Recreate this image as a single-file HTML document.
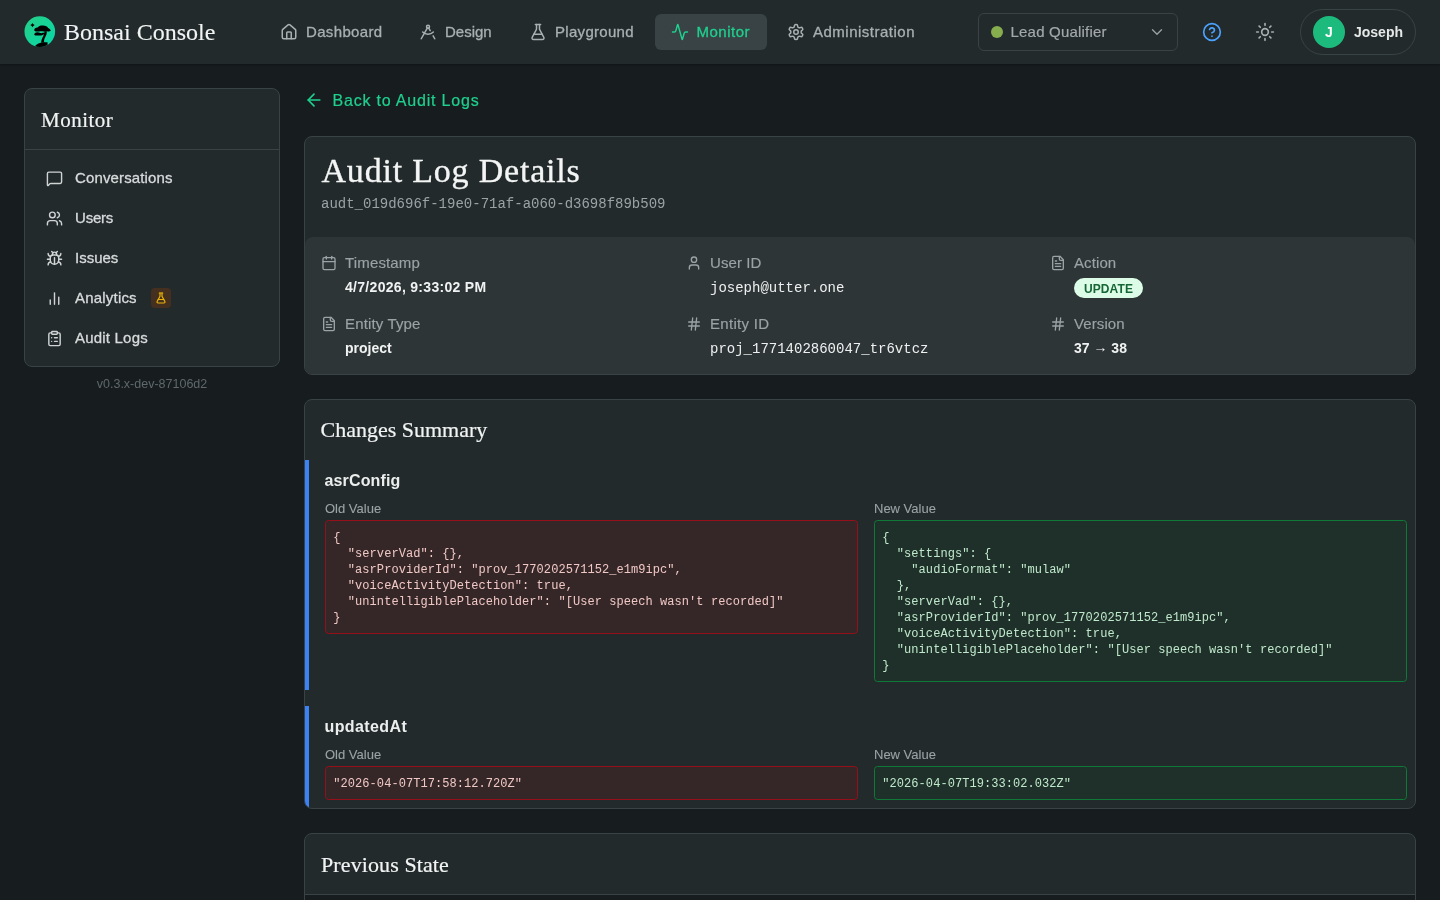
<!DOCTYPE html>
<html><head><meta charset="utf-8">
<style>
*{box-sizing:border-box;margin:0;padding:0}
html,body{width:1440px;height:900px;overflow:hidden;background:#171c1e;font-family:"Liberation Sans",sans-serif}
#root{position:absolute;left:0;top:0;width:1440px;height:900px;transform:translateZ(0)}
.b{position:absolute}
.t{position:absolute;white-space:pre}
svg.i{position:absolute;fill:none;stroke:currentColor;stroke-linecap:round;stroke-linejoin:round;display:block;overflow:visible}
</style></head><body><div id="root">

<div class="b" style="left:0;top:0;width:1440px;height:64px;background:#222a2b;box-shadow:0 1px 2px rgba(0,0,0,.3)"></div>
<svg class="b" style="left:24px;top:16px" width="32" height="32" viewBox="0 0 32 32">
<defs><linearGradient id="lg" x1="0" y1="0" x2="1" y2="1"><stop offset="0" stop-color="#26cf86"/><stop offset="1" stop-color="#06d8aa"/></linearGradient>
<clipPath id="cc"><circle cx="15.8" cy="15.6" r="15.3"/></clipPath></defs>
<circle cx="15.8" cy="15.6" r="15.3" fill="url(#lg)"/>
<g clip-path="url(#cc)" fill="#000">
<path d="M8.5 6.9l.8 1.4 1.4.8-1.4.8-.8 1.4-.8-1.4-1.4-.8 1.4-.8z"/>
<path d="M10.2 14.2C10.2 12.8 11.5 11.8 13.5 11.6 14.5 10 16.5 9.4 19 9.5 21.5 9.6 23.5 10.5 24.2 12 25.5 12.6 26.6 13.6 26.8 14.8 25.8 15.5 24.3 15.6 23 15.2 21 15.6 18.5 15.4 16.5 15.3 14.5 15.5 12.3 15.6 11.2 15.2 10.6 15 10.2 14.7 10.2 14.2Z"/>
<path d="M10.2 18.4C10.6 17.1 12 16.2 13.6 16.3 15 16.4 16.2 16.9 17.4 17.2 18.8 16.9 20.2 16.6 21 17 20.5 18.3 19 19.2 17.2 19.4 15.5 19.6 13.5 19.6 11.8 19.5 11 19.4 10.4 19 10.2 18.4Z"/>
<path d="M20.5 15.3 22.8 15.3C23 17.5 22.2 19.5 21.2 21.2 20.2 23 19.8 24.8 20.2 26.5L17.2 26.8C17.2 24.8 17.8 22.8 18.8 21 19.8 19.2 20.6 17.3 20.5 15.3Z"/>
<path d="M10.5 31C12.2 28 16 26 23.5 26.3L23.8 33 10.5 33Z"/>
</g>
</svg>
<div class="t" style="left:64px;top:15.7px;font-family:'Liberation Serif',serif;font-size:24px;line-height:32px;color:#f2f4f4;font-weight:normal;letter-spacing:0px;-webkit-text-stroke:0.12px #f2f4f4;">Bonsai Console</div>
<svg class="i" style="left:279.9px;top:22.7px;color:#a9b0b2;" width="18" height="18" viewBox="0 0 24 24" stroke-width="2"><path d="M15 21v-8a1 1 0 0 0-1-1h-4a1 1 0 0 0-1 1v8"/><path d="M3 10a2 2 0 0 1 .709-1.528l7-5.999a2 2 0 0 1 2.582 0l7 5.999A2 2 0 0 1 21 10v9a2 2 0 0 1-2 2H5a2 2 0 0 1-2-2z"/></svg>
<div class="t" style="left:306.0px;top:22px;font-family:'Liberation Sans',sans-serif;font-size:15px;line-height:20px;color:#a9b0b2;font-weight:normal;letter-spacing:0.35px;-webkit-text-stroke:0.3px #a9b0b2;">Dashboard</div>
<svg class="i" style="left:418.9px;top:22.7px;color:#a9b0b2;" width="18" height="18" viewBox="0 0 24 24" stroke-width="2"><path d="m12.99 6.74 1.93 3.44"/><path d="M19.136 12a10 10 0 0 1-14.271 0"/><path d="m21 21-2.16-3.84"/><path d="m3 21 8.02-14.26"/><circle cx="12" cy="5" r="2"/></svg>
<div class="t" style="left:445.0px;top:22px;font-family:'Liberation Sans',sans-serif;font-size:15px;line-height:20px;color:#a9b0b2;font-weight:normal;letter-spacing:0.0px;-webkit-text-stroke:0.3px #a9b0b2;">Design</div>
<svg class="i" style="left:528.9px;top:22.7px;color:#a9b0b2;" width="18" height="18" viewBox="0 0 24 24" stroke-width="2"><path d="M14 2v6a2 2 0 0 0 .245.96l5.51 10.08A2 2 0 0 1 18 22H6a2 2 0 0 1-1.755-2.96l5.51-10.08A2 2 0 0 0 10 8V2"/><path d="M6.453 15h11.094"/><path d="M8.5 2h7"/></svg>
<div class="t" style="left:555.0px;top:22px;font-family:'Liberation Sans',sans-serif;font-size:15px;line-height:20px;color:#a9b0b2;font-weight:normal;letter-spacing:0.3px;-webkit-text-stroke:0.3px #a9b0b2;">Playground</div>
<div class="b" style="left:655px;top:14px;width:112px;height:36px;border-radius:6px;background:#394244"></div>
<svg class="i" style="left:671px;top:23px;color:#1fd08e;" width="18" height="18" viewBox="0 0 24 24" stroke-width="2"><path d="M22 12h-2.48a2 2 0 0 0-1.93 1.46l-2.35 8.36a.25.25 0 0 1-.48 0L9.24 2.18a.25.25 0 0 0-.48 0l-2.35 8.36A2 2 0 0 1 4.49 12H2"/></svg>
<div class="t" style="left:696.5px;top:22px;font-family:'Liberation Sans',sans-serif;font-size:15px;line-height:20px;color:#1fd08e;font-weight:normal;letter-spacing:0.5px;-webkit-text-stroke:0.3px #1fd08e;">Monitor</div>
<svg class="i" style="left:786.9px;top:22.7px;color:#a9b0b2;" width="18" height="18" viewBox="0 0 24 24" stroke-width="2"><path d="M12.22 2h-.44a2 2 0 0 0-2 2v.18a2 2 0 0 1-1 1.73l-.43.25a2 2 0 0 1-2 0l-.15-.08a2 2 0 0 0-2.73.73l-.22.38a2 2 0 0 0 .73 2.73l.15.1a2 2 0 0 1 1 1.72v.51a2 2 0 0 1-1 1.74l-.15.09a2 2 0 0 0-.73 2.73l.22.38a2 2 0 0 0 2.73.73l.15-.08a2 2 0 0 1 2 0l.43.25a2 2 0 0 1 1 1.73V20a2 2 0 0 0 2 2h.44a2 2 0 0 0 2-2v-.18a2 2 0 0 1 1-1.73l.43-.25a2 2 0 0 1 2 0l.15.08a2 2 0 0 0 2.73-.73l.22-.39a2 2 0 0 0-.73-2.73l-.15-.08a2 2 0 0 1-1-1.74v-.5a2 2 0 0 1 1-1.74l.15-.09a2 2 0 0 0 .73-2.73l-.22-.38a2 2 0 0 0-2.73-.73l-.15.08a2 2 0 0 1-2 0l-.43-.25a2 2 0 0 1-1-1.73V4a2 2 0 0 0-2-2z"/><circle cx="12" cy="12" r="3"/></svg>
<div class="t" style="left:813.0px;top:22px;font-family:'Liberation Sans',sans-serif;font-size:15px;line-height:20px;color:#a9b0b2;font-weight:normal;letter-spacing:0.5px;-webkit-text-stroke:0.3px #a9b0b2;">Administration</div>
<div class="b" style="left:978px;top:13px;width:200px;height:38px;border:1px solid #394345;border-radius:6px"></div>
<div class="b" style="left:991px;top:26px;width:12px;height:12px;border-radius:50%;background:#86ad4e"></div>
<div class="t" style="left:1010.5px;top:22px;font-family:'Liberation Sans',sans-serif;font-size:15px;line-height:20px;color:#a3a9ab;font-weight:normal;letter-spacing:0.2px;-webkit-text-stroke:0.2px #a3a9ab;">Lead Qualifier</div>
<svg class="i" style="left:1148px;top:23px;color:#9aa0a2;" width="18" height="18" viewBox="0 0 24 24" stroke-width="1.8"><path d="m6 9 6 6 6-6"/></svg>
<svg class="i" style="left:1202px;top:22px;color:#4ba3ff;" width="20" height="20" viewBox="0 0 24 24" stroke-width="2"><circle cx="12" cy="12" r="10"/><path d="M9.09 9a3 3 0 0 1 5.83 1c0 2-3 3-3 3"/><path d="M12 17h.01"/></svg>
<svg class="i" style="left:1255px;top:22px;color:#a8aeb0;" width="20" height="20" viewBox="0 0 24 24" stroke-width="2"><circle cx="12" cy="12" r="4"/><path d="M12 2v2"/><path d="M12 20v2"/><path d="m4.93 4.93 1.41 1.41"/><path d="m17.66 17.66 1.41 1.41"/><path d="M2 12h2"/><path d="M20 12h2"/><path d="m6.34 17.66-1.41 1.41"/><path d="m19.07 4.93-1.41 1.41"/></svg>
<div class="b" style="left:1300px;top:9px;width:116px;height:46px;border:1px solid #394345;border-radius:23px"></div>
<div class="b" style="left:1313px;top:16px;width:32px;height:32px;border-radius:50%;background:#1dba7d"></div>
<div class="t" style="left:1313px;top:22px;font-family:'Liberation Sans',sans-serif;font-size:14px;line-height:20px;color:#ffffff;font-weight:bold;letter-spacing:0px;width:32px;text-align:center">J</div>
<div class="t" style="left:1354px;top:22px;font-family:'Liberation Sans',sans-serif;font-size:14px;line-height:20px;color:#e6e8e8;font-weight:bold;letter-spacing:0px;">Joseph</div>
<div class="b" style="left:24px;top:88px;width:256px;height:279px;background:#222a2b;border:1px solid #394345;border-radius:8px"></div>
<div class="t" style="left:41px;top:105.5px;font-family:'Liberation Serif',serif;font-size:21px;line-height:28px;color:#f2f4f4;font-weight:normal;letter-spacing:0.5px;-webkit-text-stroke:0.2px #f2f4f4;">Monitor</div>
<div class="b" style="left:25px;top:149px;width:254px;height:1px;background:#394345"></div>
<svg class="i" style="left:45.5px;top:169.5px;color:#d0d4d5;" width="17" height="17" viewBox="0 0 24 24" stroke-width="2"><path d="M22 17a2 2 0 0 1-2 2H6.828a2 2 0 0 0-1.414.586l-2.202 2.202A.71.71 0 0 1 2 21.286V5a2 2 0 0 1 2-2h16a2 2 0 0 1 2 2z"/></svg>
<div class="t" style="left:75px;top:168px;font-family:'Liberation Sans',sans-serif;font-size:15px;line-height:20px;color:#d8dbdc;font-weight:normal;letter-spacing:0.13px;-webkit-text-stroke:0.3px #d8dbdc;">Conversations</div>
<svg class="i" style="left:45.5px;top:209.5px;color:#d0d4d5;" width="17" height="17" viewBox="0 0 24 24" stroke-width="2"><path d="M16 21v-2a4 4 0 0 0-4-4H6a4 4 0 0 0-4 4v2"/><circle cx="9" cy="7" r="4"/><path d="M22 21v-2a4 4 0 0 0-3-3.87"/><path d="M16 3.13a4 4 0 0 1 0 7.75"/></svg>
<div class="t" style="left:75px;top:208px;font-family:'Liberation Sans',sans-serif;font-size:15px;line-height:20px;color:#d8dbdc;font-weight:normal;letter-spacing:-0.2px;-webkit-text-stroke:0.3px #d8dbdc;">Users</div>
<svg class="i" style="left:45.5px;top:249.5px;color:#d0d4d5;" width="17" height="17" viewBox="0 0 24 24" stroke-width="2"><path d="m8 2 1.88 1.88"/><path d="M14.12 3.88 16 2"/><path d="M9 7.13v-1a3.003 3.003 0 1 1 6 0v1"/><path d="M12 20c-3.3 0-6-2.7-6-6v-3a4 4 0 0 1 4-4h4a4 4 0 0 1 4 4v3c0 3.3-2.7 6-6 6"/><path d="M12 20v-9"/><path d="M6.53 9C4.6 8.8 3 7.1 3 5"/><path d="M6 13H2"/><path d="M3 21c0-2.1 1.7-3.9 3.8-4"/><path d="M20.97 5c0 2.1-1.6 3.8-3.5 4"/><path d="M22 13h-4"/><path d="M17.2 17c2.1.1 3.8 1.9 3.8 4"/></svg>
<div class="t" style="left:75px;top:248px;font-family:'Liberation Sans',sans-serif;font-size:15px;line-height:20px;color:#d8dbdc;font-weight:normal;letter-spacing:0px;-webkit-text-stroke:0.3px #d8dbdc;">Issues</div>
<svg class="i" style="left:45.5px;top:289.5px;color:#d0d4d5;" width="17" height="17" viewBox="0 0 24 24" stroke-width="2"><path d="M18 20V10"/><path d="M12 20V4"/><path d="M6 20v-6"/></svg>
<div class="t" style="left:75px;top:288px;font-family:'Liberation Sans',sans-serif;font-size:15px;line-height:20px;color:#d8dbdc;font-weight:normal;letter-spacing:0.2px;-webkit-text-stroke:0.3px #d8dbdc;">Analytics</div>
<svg class="i" style="left:45.5px;top:329.5px;color:#d0d4d5;" width="17" height="17" viewBox="0 0 24 24" stroke-width="2"><rect width="8" height="4" x="8" y="2" rx="1" ry="1"/><path d="M16 4h2a2 2 0 0 1 2 2v14a2 2 0 0 1-2 2H6a2 2 0 0 1-2-2V6a2 2 0 0 1 2-2h2"/><path d="M12 11h4"/><path d="M12 16h4"/><path d="M8 11h.01"/><path d="M8 16h.01"/></svg>
<div class="t" style="left:75px;top:328px;font-family:'Liberation Sans',sans-serif;font-size:15px;line-height:20px;color:#d8dbdc;font-weight:normal;letter-spacing:0.2px;-webkit-text-stroke:0.3px #d8dbdc;">Audit Logs</div>
<div class="b" style="left:151px;top:288px;width:20px;height:20px;border-radius:4px;background:#45301f"></div>
<svg class="i" style="left:155px;top:292px;color:#eab308;" width="12" height="12" viewBox="0 0 24 24" stroke-width="2.4"><path d="M14 2v6a2 2 0 0 0 .245.96l5.51 10.08A2 2 0 0 1 18 22H6a2 2 0 0 1-1.755-2.96l5.51-10.08A2 2 0 0 0 10 8V2"/><path d="M6.453 15h11.094"/><path d="M8.5 2h7"/></svg>
<div class="t" style="left:24px;top:376px;font-family:'Liberation Sans',sans-serif;font-size:12.5px;line-height:16px;color:#5f686b;font-weight:normal;letter-spacing:0px;width:256px;text-align:center">v0.3.x-dev-87106d2</div>
<svg class="i" style="left:304px;top:90px;color:#1fd08e;" width="20" height="20" viewBox="0 0 24 24" stroke-width="2"><path d="m12 19-7-7 7-7"/><path d="M19 12H5"/></svg>
<div class="t" style="left:332.5px;top:90px;font-family:'Liberation Sans',sans-serif;font-size:16px;line-height:22px;color:#1fd08e;font-weight:normal;letter-spacing:0.8px;-webkit-text-stroke:0.2px #1fd08e;">Back to Audit Logs</div>
<div class="b" style="left:304px;top:136px;width:1112px;height:239px;background:#222a2b;border:1px solid #394345;border-radius:8px;overflow:hidden"><div class="b" style="left:0;top:100px;width:1110px;height:138px;background:#2e3537;border-radius:8px 8px 0 0"></div></div>
<div class="t" style="left:321.5px;top:151px;font-family:'Liberation Serif',serif;font-size:34px;line-height:40px;color:#f4f5f5;font-weight:normal;letter-spacing:0.8px;-webkit-text-stroke:0.35px #f4f5f5;">Audit Log Details</div>
<div class="t" style="left:321px;top:193.5px;font-family:'Liberation Mono',monospace;font-size:14px;line-height:20px;color:#9ba3a6;font-weight:normal;letter-spacing:0px;">audt_019d696f-19e0-71af-a060-d3698f89b509</div>
<svg class="i" style="left:321px;top:255px;color:#9ba3a6;" width="16" height="16" viewBox="0 0 24 24" stroke-width="2"><path d="M8 2v4"/><path d="M16 2v4"/><rect width="18" height="18" x="3" y="4" rx="2"/><path d="M3 10h18"/></svg>
<div class="t" style="left:345px;top:253px;font-family:'Liberation Sans',sans-serif;font-size:15px;line-height:20px;color:#9ba3a6;font-weight:normal;letter-spacing:0.15px;-webkit-text-stroke:0.15px #9ba3a6;">Timestamp</div>
<svg class="i" style="left:321px;top:316px;color:#9ba3a6;" width="16" height="16" viewBox="0 0 24 24" stroke-width="2"><path d="M15 2H6a2 2 0 0 0-2 2v16a2 2 0 0 0 2 2h12a2 2 0 0 0 2-2V7Z"/><path d="M14 2v4a2 2 0 0 0 2 2h4"/><path d="M10 9H8"/><path d="M16 13H8"/><path d="M16 17H8"/></svg>
<div class="t" style="left:345px;top:314px;font-family:'Liberation Sans',sans-serif;font-size:15px;line-height:20px;color:#9ba3a6;font-weight:normal;letter-spacing:0.15px;-webkit-text-stroke:0.15px #9ba3a6;">Entity Type</div>
<svg class="i" style="left:686px;top:255px;color:#9ba3a6;" width="16" height="16" viewBox="0 0 24 24" stroke-width="2"><path d="M19 21v-2a4 4 0 0 0-4-4H9a4 4 0 0 0-4 4v2"/><circle cx="12" cy="7" r="4"/></svg>
<div class="t" style="left:710px;top:253px;font-family:'Liberation Sans',sans-serif;font-size:15px;line-height:20px;color:#9ba3a6;font-weight:normal;letter-spacing:0.1px;-webkit-text-stroke:0.15px #9ba3a6;">User ID</div>
<svg class="i" style="left:686px;top:316px;color:#9ba3a6;" width="16" height="16" viewBox="0 0 24 24" stroke-width="2"><path d="M4 9h16"/><path d="M4 15h16"/><path d="M10 3 8 21"/><path d="M16 3l-2 18"/></svg>
<div class="t" style="left:710px;top:314px;font-family:'Liberation Sans',sans-serif;font-size:15px;line-height:20px;color:#9ba3a6;font-weight:normal;letter-spacing:0.3px;-webkit-text-stroke:0.15px #9ba3a6;">Entity ID</div>
<svg class="i" style="left:1050px;top:255px;color:#9ba3a6;" width="16" height="16" viewBox="0 0 24 24" stroke-width="2"><path d="M15 2H6a2 2 0 0 0-2 2v16a2 2 0 0 0 2 2h12a2 2 0 0 0 2-2V7Z"/><path d="M14 2v4a2 2 0 0 0 2 2h4"/><path d="M10 9H8"/><path d="M16 13H8"/><path d="M16 17H8"/></svg>
<div class="t" style="left:1074px;top:253px;font-family:'Liberation Sans',sans-serif;font-size:15px;line-height:20px;color:#9ba3a6;font-weight:normal;letter-spacing:0.1px;-webkit-text-stroke:0.15px #9ba3a6;">Action</div>
<svg class="i" style="left:1050px;top:316px;color:#9ba3a6;" width="16" height="16" viewBox="0 0 24 24" stroke-width="2"><path d="M4 9h16"/><path d="M4 15h16"/><path d="M10 3 8 21"/><path d="M16 3l-2 18"/></svg>
<div class="t" style="left:1074px;top:314px;font-family:'Liberation Sans',sans-serif;font-size:15px;line-height:20px;color:#9ba3a6;font-weight:normal;letter-spacing:0.1px;-webkit-text-stroke:0.15px #9ba3a6;">Version</div>
<div class="t" style="left:345px;top:277px;font-family:'Liberation Sans',sans-serif;font-size:14px;line-height:20px;color:#f1f3f3;font-weight:bold;letter-spacing:0.3px;">4/7/2026, 9:33:02 PM</div>
<div class="t" style="left:345px;top:338px;font-family:'Liberation Sans',sans-serif;font-size:14px;line-height:20px;color:#f1f3f3;font-weight:bold;letter-spacing:0px;">project</div>
<div class="t" style="left:710px;top:277.5px;font-family:'Liberation Mono',monospace;font-size:14px;line-height:20px;color:#eef0f0;font-weight:normal;letter-spacing:0px;">joseph@utter.one</div>
<div class="t" style="left:710px;top:338.5px;font-family:'Liberation Mono',monospace;font-size:14px;line-height:20px;color:#eef0f0;font-weight:normal;letter-spacing:0px;">proj_1771402860047_tr6vtcz</div>
<div class="b" style="left:1074px;top:278px;width:69px;height:20px;border-radius:10px;background:#dcfce7"></div>
<div class="t" style="left:1074px;top:279px;font-family:'Liberation Sans',sans-serif;font-size:12px;line-height:20px;color:#166534;font-weight:bold;letter-spacing:0.1px;width:69px;text-align:center">UPDATE</div>
<div class="t" style="left:1074px;top:338px;font-family:'Liberation Sans',sans-serif;font-size:14px;line-height:20px;color:#f1f3f3;font-weight:bold;letter-spacing:0px;">37 <span style="position:relative;top:-1.5px">→</span> 38</div>
<div class="b" style="left:304px;top:399px;width:1112px;height:410px;background:#222a2b;border:1px solid #394345;border-radius:8px;overflow:hidden"><div class="b" style="left:0;top:60px;width:4px;height:230px;background:#3b82f6"></div><div class="b" style="left:0;top:306px;width:4px;height:104px;background:#3b82f6"></div></div>
<div class="t" style="left:320.5px;top:415px;font-family:'Liberation Serif',serif;font-size:22px;line-height:30px;color:#f2f4f4;font-weight:normal;letter-spacing:0px;-webkit-text-stroke:0.2px #f2f4f4;">Changes Summary</div>
<div class="t" style="left:324.5px;top:471px;font-family:'Liberation Sans',sans-serif;font-size:16px;line-height:20px;color:#eceeee;font-weight:bold;letter-spacing:0.15px;">asrConfig</div>
<div class="t" style="left:325px;top:501px;font-family:'Liberation Sans',sans-serif;font-size:13px;line-height:16px;color:#9ba3a6;font-weight:normal;letter-spacing:0px;-webkit-text-stroke:0.1px #9ba3a6;">Old Value</div>
<div class="t" style="left:874px;top:501px;font-family:'Liberation Sans',sans-serif;font-size:13px;line-height:16px;color:#9ba3a6;font-weight:normal;letter-spacing:0px;-webkit-text-stroke:0.1px #9ba3a6;">New Value</div>
<div class="b" style="left:325px;top:520px;width:533px;height:114px;border-radius:3.5px;background:#352628;border:1px solid #960f19"></div><div class="t" style="left:333.3px;top:529.5px;color:#f0c8c4;font-family:'Liberation Mono',monospace;font-size:12px;line-height:16px;letter-spacing:0.06px">{
  "serverVad": {},
  "asrProviderId": "prov_1770202571152_e1m9ipc",
  "voiceActivityDetection": true,
  "unintelligiblePlaceholder": "[User speech wasn't recorded]"
}</div>
<div class="b" style="left:874px;top:520px;width:533px;height:162px;border-radius:3.5px;background:#1f2f2a;border:1px solid #0f7a37"></div><div class="t" style="left:882.3px;top:529.5px;color:#bfe9cb;font-family:'Liberation Mono',monospace;font-size:12px;line-height:16px;letter-spacing:0.06px">{
  "settings": {
    "audioFormat": "mulaw"
  },
  "serverVad": {},
  "asrProviderId": "prov_1770202571152_e1m9ipc",
  "voiceActivityDetection": true,
  "unintelligiblePlaceholder": "[User speech wasn't recorded]"
}</div>
<div class="t" style="left:324.5px;top:717px;font-family:'Liberation Sans',sans-serif;font-size:16px;line-height:20px;color:#eceeee;font-weight:bold;letter-spacing:0.4px;">updatedAt</div>
<div class="t" style="left:325px;top:747px;font-family:'Liberation Sans',sans-serif;font-size:13px;line-height:16px;color:#9ba3a6;font-weight:normal;letter-spacing:0px;-webkit-text-stroke:0.1px #9ba3a6;">Old Value</div>
<div class="t" style="left:874px;top:747px;font-family:'Liberation Sans',sans-serif;font-size:13px;line-height:16px;color:#9ba3a6;font-weight:normal;letter-spacing:0px;-webkit-text-stroke:0.1px #9ba3a6;">New Value</div>
<div class="b" style="left:325px;top:766px;width:533px;height:34px;border-radius:3.5px;background:#352628;border:1px solid #960f19"></div><div class="t" style="left:333.3px;top:775.5px;color:#f0c8c4;font-family:'Liberation Mono',monospace;font-size:12px;line-height:16px;letter-spacing:0.06px">"2026-04-07T17:58:12.720Z"</div>
<div class="b" style="left:874px;top:766px;width:533px;height:34px;border-radius:3.5px;background:#1f2f2a;border:1px solid #0f7a37"></div><div class="t" style="left:882.3px;top:775.5px;color:#bfe9cb;font-family:'Liberation Mono',monospace;font-size:12px;line-height:16px;letter-spacing:0.06px">"2026-04-07T19:33:02.032Z"</div>
<div class="b" style="left:304px;top:833px;width:1112px;height:200px;background:#222a2b;border:1px solid #394345;border-radius:8px;overflow:hidden"><div class="b" style="left:0;top:60px;width:1110px;height:1px;background:#394345"></div><div class="b" style="left:0;top:61px;width:1110px;height:200px;background:#171c1e"></div></div>
<div class="t" style="left:321px;top:849.5px;font-family:'Liberation Serif',serif;font-size:22px;line-height:30px;color:#f2f4f4;font-weight:normal;letter-spacing:0.1px;-webkit-text-stroke:0.2px #f2f4f4;">Previous State</div>
</div></body></html>
